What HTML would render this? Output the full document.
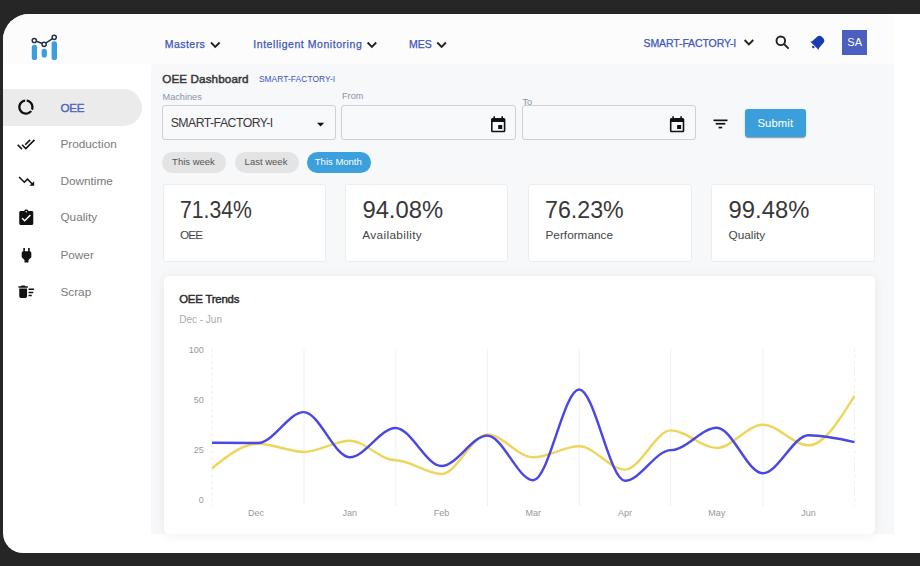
<!DOCTYPE html>
<html><head><meta charset="utf-8">
<style>
*{box-sizing:border-box;margin:0;padding:0}
html,body{width:920px;height:566px;overflow:hidden;background:#262626;font-family:"Liberation Sans",sans-serif}
.abs{position:absolute}
#app{position:absolute;left:3.3px;top:13.5px;width:916.7px;height:539px;background:#fff;border-radius:26px 0 0 20px;overflow:hidden}
#hdr{position:absolute;left:0;top:0;width:891px;height:50.5px;background:#fcfcfd}
#main{position:absolute;left:147.6px;top:50.5px;width:743.5px;height:470px;background:#f7f8fa;border-radius:4px 0 0 0}
#mainsh{position:absolute;left:147.6px;top:520.5px;width:743.5px;height:12px;background:linear-gradient(rgba(0,0,0,0.025),rgba(0,0,0,0))}
.t{position:absolute;white-space:nowrap;line-height:1}
.nav{color:#3d55bb;font-size:10.5px;letter-spacing:0.45px;-webkit-text-stroke:0.25px #3d55bb}
.side{color:#7a7a7a;font-size:11.8px}
.lbl{color:#8a93a8;font-size:9.2px}
.box{position:absolute;top:105.4px;height:34.4px;border:1px solid #cfd0d3;border-radius:3px;background:#f8f9fb}
.chip{position:absolute;top:151.75px;height:20.8px;width:64px;border-radius:11px;background:#e4e4e4;color:#555;font-size:9.5px;text-align:center;line-height:20.8px;text-indent:-1px}
.card{position:absolute;top:183.7px;height:78px;width:163.5px;background:#fff;border:1px solid #ededed;border-radius:3px}
.val{position:absolute;left:16px;top:13px;font-size:23.8px;color:#383838;line-height:1;transform-origin:0 0}
.cl{position:absolute;left:16.5px;top:45.1px;font-size:11.8px;color:#444;line-height:1}
.ax{color:#9a9a9a;font-size:9px}
</style></head><body>
<div id="app">
 <div id="hdr"></div>
 <div id="main"></div>
</div>
<!-- logo -->
<svg class="abs" style="left:0;top:0" width="920" height="566">
 <g fill="#3a9fdc">
  <rect x="31.8" y="44.8" width="5.2" height="15.3" rx="2.6"/>
  <rect x="41.6" y="48.8" width="5.3" height="8.8" rx="2.6"/>
  <rect x="51.6" y="41.3" width="5.4" height="18.8" rx="2.7"/>
 </g>
 <g stroke="#1f2d3d" stroke-width="1.45" fill="#fff">
  <polyline points="34.3,40.5 44.1,44.3 54.2,37.3" fill="none"/>
  <circle cx="34.3" cy="40.5" r="2.1"/>
  <circle cx="44.1" cy="44.3" r="2.1"/>
  <circle cx="54.2" cy="37.3" r="2.1"/>
 </g>
</svg>
<!-- header nav -->
<span class="t nav" style="left:164.8px;top:38.5px">Masters</span>
<span class="t nav" style="left:253.3px;top:38.5px;letter-spacing:0.55px">Intelligent Monitoring</span>
<span class="t nav" style="left:409.1px;top:38.5px;letter-spacing:0px">MES</span>
<span class="t nav" style="left:643.5px;top:37.6px;letter-spacing:-0.1px">SMART-FACTORY-I</span>
<svg class="abs" style="left:0;top:0" width="920" height="566" fill="none" stroke="#222" stroke-width="1.9">
 <polyline points="211,42.5 215.3,46.8 219.6,42.5"/>
 <polyline points="367.6,42.5 371.9,46.8 376.2,42.5"/>
 <polyline points="437.3,42.5 441.6,46.8 445.9,42.5"/>
 <polyline points="744.6,40 748.9,44.3 753.2,40"/>
 <circle cx="780.8" cy="40.8" r="4.3" stroke-width="1.9"/>
 <line x1="784" y1="44" x2="788.6" y2="48.6" stroke-width="1.9"/>
</svg>
<!-- bell -->
<svg class="abs" style="left:0;top:0" width="920" height="566">
 <g transform="translate(818.4,41.8) rotate(45)" fill="#1a3caf">
  <path d="M-4.9,4 L-4.4,-2.6 C-4.2,-5 -2.8,-6 0,-6 C2.8,-6 4.2,-5 4.4,-2.6 L4.9,4 L5.7,5.6 L-5.7,5.6 Z"/>
  <ellipse cx="0" cy="7.3" rx="1.4" ry="1.1"/>
 </g>
</svg>
<div class="abs" style="left:842.3px;top:29.9px;width:24.7px;height:24.7px;background:#4a5fc0;color:#fff;font-size:11px;line-height:25.6px;text-align:center">SA</div>

<!-- sidebar -->
<div class="abs" style="left:3px;top:88.5px;width:139.4px;height:37px;background:#ebebeb;border-radius:0 18.5px 18.5px 0"></div>
<svg class="abs" style="left:0;top:0" width="150" height="320" fill="#111">
 <path transform="translate(16.66,97.8) scale(0.77)" d="M13 2.05v3.03c3.39.49 6 3.39 6 6.92 0 .9-.18 1.75-.48 2.54l2.6 1.53c.56-1.24.88-2.62.88-4.07 0-5.18-3.95-9.45-9-9.95zM12 19c-3.87 0-7-3.13-7-7 0-3.53 2.61-6.43 6-6.92V2.05c-5.06.5-9 4.76-9 9.95 0 5.52 4.47 10 9.99 10 3.31 0 6.24-1.61 8.06-4.09l-2.6-1.53C16.17 17.98 14.21 19 12 19z"/>
 <path transform="translate(16.8,135) scale(0.77)" d="M18 7l-1.41-1.41-6.34 6.34 1.41 1.41L18 7zm4.24-1.41L11.66 16.17 7.48 12l-1.41 1.41L11.66 19l12-12-1.42-1.41zM.41 13.41L6 19l1.41-1.41L1.83 12 .41 13.41z"/>
 <path transform="translate(17.0,171.8) scale(0.78)" d="M16 18l2.29-2.29-4.88-4.88-4 4L2 7.41 3.41 6l6 6 4-4 6.3 6.29L22 12v6z"/>
 <path transform="translate(16.9,208.6) scale(0.78)" d="M19 3h-4.18C14.4 1.84 13.3 1 12 1c-1.3 0-2.4.84-2.82 2H5c-1.1 0-2 .9-2 2v14c0 1.1.9 2 2 2h14c1.1 0 2-.9 2-2V5c0-1.1-.9-2-2-2zm-7 0c.55 0 1 .45 1 1s-.45 1-1 1-1-.45-1-1 .45-1 1-1zm-2 14l-4-4 1.41-1.41L10 14.17l6.59-6.59L18 9l-8 8z"/>
 <path transform="translate(16.9,245.6) scale(0.8)" d="M16.01 7L16 3h-2v4h-4V3H8v4h-.01C7 6.99 6 7.99 6 8.99v5.49L9.5 18v3h5v-3l3.5-3.51v-5.5c0-1-1-2-1.99-1.99z"/>
 <path transform="translate(16.9,282.3) scale(0.78)" d="M15 16h4v2h-4zm0-8h7v2h-7zm0 4h6v2h-6zM3 18c0 1.1.9 2 2 2h6c1.1 0 2-.9 2-2V8H3v10zM14 5h-3l-1-1H6L5 5H2v2h12z"/>
</svg>
<span class="t" style="left:60.4px;top:102.2px;font-size:11.7px;color:#4a5fc4;-webkit-text-stroke:0.35px #4a5fc4;letter-spacing:-0.25px">OEE</span>
<span class="t side" style="left:60.4px;top:138.8px">Production</span>
<span class="t side" style="left:60.4px;top:175.6px">Downtime</span>
<span class="t side" style="left:60.4px;top:212.4px">Quality</span>
<span class="t side" style="left:60.4px;top:249.8px">Power</span>
<span class="t side" style="left:60.4px;top:286.9px">Scrap</span>

<!-- main content -->
<span class="t" style="left:162.2px;top:72.9px;font-size:11.7px;color:#363636;-webkit-text-stroke:0.45px #363636;letter-spacing:0.1px">OEE Dashboard</span>
<span class="t" style="left:258.9px;top:75.4px;font-size:8.4px;color:#3a56c4;letter-spacing:0.08px">SMART-FACTORY-I</span>
<span class="t lbl" style="left:162.5px;top:93px">Machines</span>
<span class="t lbl" style="left:342px;top:92.3px">From</span>
<span class="t lbl" style="left:522.4px;top:97.8px">To</span>
<div class="box" style="left:162px;width:173.6px"></div>
<div class="box" style="left:341.2px;width:174.4px"></div>
<div class="box" style="left:522px;width:173.9px"></div>
<span class="t" style="left:170.7px;top:117.2px;font-size:12.3px;color:#383838;letter-spacing:-0.55px">SMART-FACTORY-I</span>
<svg class="abs" style="left:0;top:0" width="920" height="566">
 <polygon points="317,122.8 324.2,122.8 320.6,126.5" fill="#111"/>
 <g fill="#111">
  <path transform="translate(488.6,115.5) scale(0.8)" d="M17 12h-5v5h5v-5zM16 1v2H8V1H6v2H5c-1.11 0-1.99.9-1.99 2L3 19c0 1.1.89 2 2 2h14c1.1 0 2-.9 2-2V5c0-1.1-.9-2-2-2h-1V1h-2zm3 18H5V8h14v11z"/>
  <path transform="translate(667.5,115.5) scale(0.8)" d="M17 12h-5v5h5v-5zM16 1v2H8V1H6v2H5c-1.11 0-1.99.9-1.99 2L3 19c0 1.1.89 2 2 2h14c1.1 0 2-.9 2-2V5c0-1.1-.9-2-2-2h-1V1h-2zm3 18H5V8h14v11z"/>
  <rect x="713.5" y="119.5" width="14" height="1.7"/>
  <rect x="715.7" y="122.9" width="9.6" height="1.7"/>
  <rect x="718.6" y="126.7" width="3.6" height="1.7"/>
 </g>
</svg>
<div class="abs" style="left:744.9px;top:109.3px;width:60.9px;height:27.8px;background:#3a9fdb;border-radius:3px;box-shadow:0 2px 1px -1px rgba(0,0,0,.2),0 1px 1px 0 rgba(0,0,0,.14),0 1px 3px 0 rgba(0,0,0,.12);color:#fff;font-size:11.2px;line-height:29.2px;text-align:center;-webkit-text-stroke:0.05px #fff;letter-spacing:0.15px">Submit</div>

<div class="chip" style="left:162px">This week</div>
<div class="chip" style="left:234.5px">Last week</div>
<div class="chip" style="left:306.8px;background:#3ba0dc;color:#fff">This Month</div>

<div class="card" style="left:162.6px"><span class="val" style="transform:scaleX(0.89);left:16.2px">71.34%</span><span class="cl" style="letter-spacing:-0.9px">OEE</span></div>
<div class="card" style="left:344.8px"><span class="val" style="left:16.6px">94.08%</span><span class="cl" style="letter-spacing:0.35px">Availability</span></div>
<div class="card" style="left:528px"><span class="val" style="transform:scaleX(0.975);left:16.2px">76.23%</span><span class="cl">Performance</span></div>
<div class="card" style="left:711px"><span class="val" style="left:16.6px">99.48%</span><span class="cl">Quality</span></div>

<div class="abs" style="left:163.8px;top:276px;width:711px;height:257.8px;background:#fff;border-radius:5px;box-shadow:0 1px 12px rgba(0,0,0,0.07)"></div>
<span class="t" style="left:179.2px;top:294px;font-size:11.4px;color:#2b2b2b;-webkit-text-stroke:0.45px #2b2b2b;letter-spacing:-0.2px">OEE Trends</span>
<span class="t" style="left:179.2px;top:314.5px;font-size:10px;color:#aaa">Dec - Jun</span>
<svg class="abs" style="left:0;top:0" width="920" height="566">
 <g stroke="#eef0f2" stroke-width="1">
  <line x1="304" y1="349" x2="304" y2="506"/>
  <line x1="395.8" y1="349" x2="395.8" y2="506"/>
  <line x1="487.4" y1="349" x2="487.4" y2="506"/>
  <line x1="579.3" y1="349" x2="579.3" y2="506"/>
  <line x1="670.7" y1="349" x2="670.7" y2="506"/>
  <line x1="762.9" y1="349" x2="762.9" y2="506"/>
 </g>
 <g stroke="#e3e6eb" stroke-width="1" stroke-dasharray="2.5 3.5">
  <line x1="212" y1="349" x2="212" y2="506"/>
  <line x1="854.4" y1="349" x2="854.4" y2="506"/>
 </g>
 <path d="M212.00,468.20 C227.30,455.95 242.60,443.70 257.89,443.70 C273.19,443.70 288.49,451.90 303.79,451.90 C319.08,451.90 334.38,440.70 349.68,440.70 C364.98,440.70 380.27,460.30 395.57,460.30 C410.87,460.30 426.17,474.00 441.46,474.00 C456.76,474.00 472.06,434.50 487.36,434.50 C502.65,434.50 517.95,457.30 533.25,457.30 C548.55,457.30 563.85,446.30 579.14,446.30 C594.44,446.30 609.74,469.60 625.04,469.60 C640.33,469.60 655.63,430.40 670.93,430.40 C686.23,430.40 701.52,448.00 716.82,448.00 C732.12,448.00 747.42,424.70 762.71,424.70 C778.01,424.70 793.31,445.30 808.61,445.30 C823.90,445.30 839.20,420.60 854.50,395.90" fill="none" stroke="#eed55c" stroke-width="2.45"/>
 <path d="M212.00,442.80 C227.30,442.90 242.60,443.00 257.89,443.00 C273.19,443.00 288.49,412.10 303.79,412.10 C319.08,412.10 334.38,457.20 349.68,457.20 C364.98,457.20 380.27,428.00 395.57,428.00 C410.87,428.00 426.17,466.00 441.46,466.00 C456.76,466.00 472.06,435.60 487.36,435.60 C502.65,435.60 517.95,480.20 533.25,480.20 C548.55,480.20 563.85,389.50 579.14,389.50 C594.44,389.50 609.74,480.70 625.04,480.70 C640.33,480.70 655.63,450.10 670.93,450.10 C686.23,450.10 701.52,427.70 716.82,427.70 C732.12,427.70 747.42,473.30 762.71,473.30 C778.01,473.30 793.31,435.30 808.61,435.30 C823.90,435.30 839.20,438.70 854.50,442.10" fill="none" stroke="#4a47e4" stroke-width="2.45"/>
 <g fill="#999" font-size="9" font-family="Liberation Sans" text-anchor="end">
  <text x="203.8" y="353.3">100</text>
  <text x="203.8" y="403">50</text>
  <text x="203.8" y="452.8">25</text>
  <text x="203.8" y="503.3">0</text>
 </g>
 <g fill="#999" font-size="9" font-family="Liberation Sans" text-anchor="middle">
  <text x="255.9" y="516">Dec</text>
  <text x="349.7" y="516">Jan</text>
  <text x="441.4" y="516">Feb</text>
  <text x="533.2" y="516">Mar</text>
  <text x="625" y="516">Apr</text>
  <text x="716.8" y="516">May</text>
  <text x="808.5" y="516">Jun</text>
 </g>
</svg>
</body></html>
